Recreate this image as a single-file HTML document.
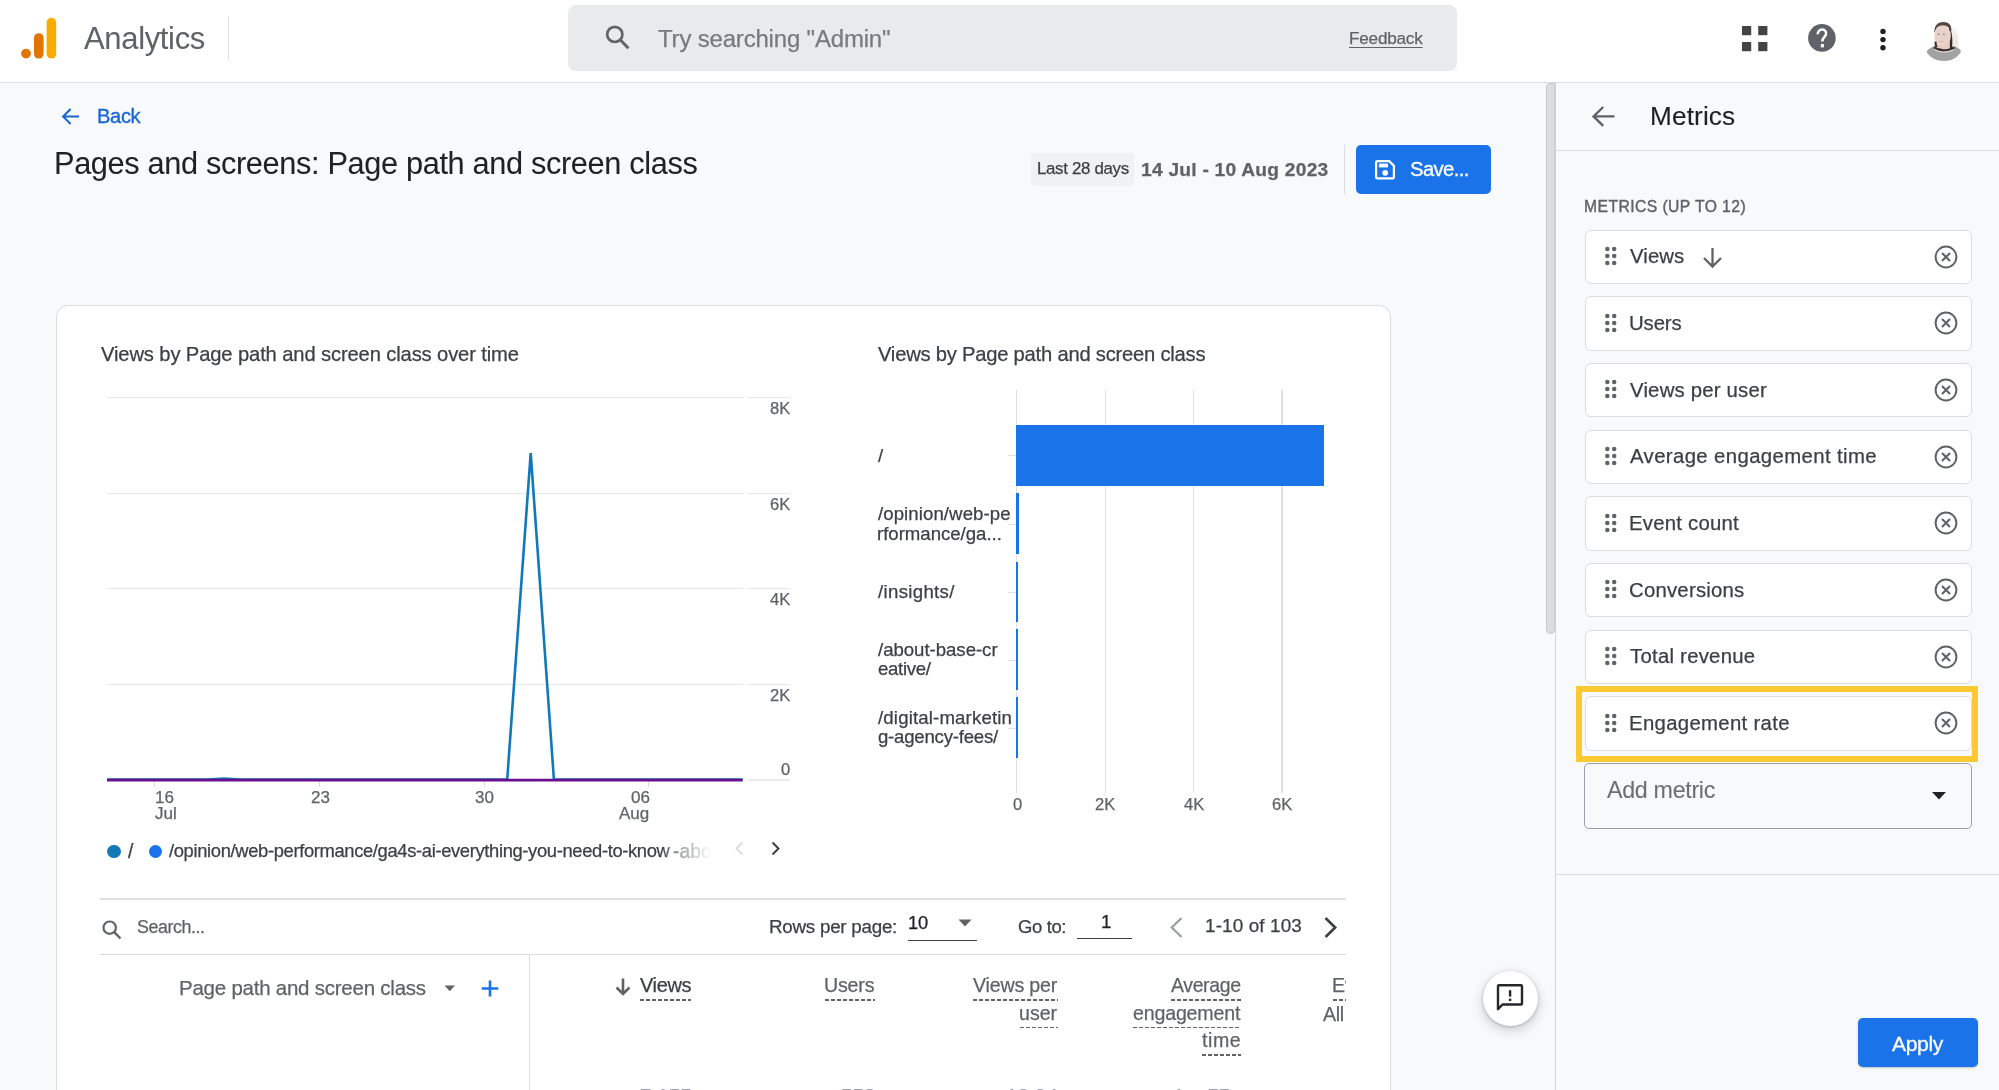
<!DOCTYPE html>
<html><head><meta charset="utf-8"><title>Analytics</title>
<style>
html,body{margin:0;padding:0;}
body{width:1999px;height:1090px;overflow:hidden;position:relative;background:#f8f9fa;font-family:"Liberation Sans",sans-serif;-webkit-font-smoothing:antialiased;}
.t{position:absolute;white-space:nowrap;line-height:1;will-change:transform;-webkit-text-stroke-width:0.25px;}
.ic{position:absolute;display:block;overflow:visible;}
.mrow{position:absolute;left:1584.5px;width:387.5px;height:54.5px;box-sizing:border-box;background:#fff;border:1.3px solid #dadce0;border-radius:6px;}
</style></head><body>
<div style="position:absolute;left:0;top:0;width:1999px;height:81.5px;background:#fff;border-bottom:1.3px solid #dadce0"></div>
<svg class="ic" style="left:20px;top:17px" width="38" height="43" viewBox="0 0 38 43">
<circle cx="6" cy="36.6" r="4.9" fill="#e37400"/>
<rect x="14" y="16.2" width="9.6" height="25.4" rx="4.8" fill="#e37400"/>
<rect x="26.6" y="0.8" width="9.6" height="40.8" rx="4.8" fill="#f9ab00"/></svg>
<div style="position:absolute;left:228px;top:16px;width:1px;height:44px;background:#dadce0"></div>
<div style="position:absolute;left:568px;top:5px;width:889px;height:66px;background:#e9eaee;border-radius:8px"></div>
<svg class="ic" style="left:602px;top:24px" width="30" height="28" viewBox="0 0 30 28"><circle cx="12.8" cy="10.4" r="7.6" fill="none" stroke="#5f6368" stroke-width="2.7"/><path d="M18.2 15.8 L26.4 24.2" stroke="#5f6368" stroke-width="3"/></svg>
<svg class="ic" style="left:1741.6px;top:25.5px" width="26" height="26" viewBox="0 0 26 26" fill="#444"><rect x="0" y="0" width="9.2" height="9.2"/><rect x="16.2" y="0" width="9.2" height="9.2"/><rect x="0" y="16" width="9.2" height="9.2"/><rect x="16.2" y="16" width="9.2" height="9.2"/></svg>
<svg class="ic" style="left:1807.5px;top:24.2px" width="28" height="28" viewBox="0 0 28 28"><circle cx="13.9" cy="13.9" r="13.8" fill="#5f6368"/><path d="M9.7 10.2 C9.7 7.2 11.6 5.6 14 5.6 C16.4 5.6 18.1 7.3 18.1 9.6 C18.1 12.8 14.3 13.2 14.3 17.6" fill="none" stroke="#fff" stroke-width="2.5"/><rect x="12.8" y="20" width="3.1" height="3.4" fill="#fff"/></svg>
<svg class="ic" style="left:1878.5px;top:28px" width="8" height="24" viewBox="0 0 8 24" fill="#202124"><circle cx="4" cy="3.4" r="2.7"/><circle cx="4" cy="11.6" r="2.7"/><circle cx="4" cy="19.8" r="2.7"/></svg>
<svg class="ic" style="left:1915px;top:15px" width="60" height="52" viewBox="0 0 60 52">
<defs><clipPath id="av"><circle cx="28.7" cy="26.5" r="20"/></clipPath><filter id="bl"><feGaussianBlur stdDeviation="0.45"/></filter><filter id="bl2"><feGaussianBlur stdDeviation="2"/></filter></defs>
<g clip-path="url(#av)"><rect width="60" height="52" fill="#ffffff"/>
<g filter="url(#bl2)"><path d="M37 12 C42 16 44 26 43 33 L38 33 Z" fill="#dcdad5" opacity="0.8"/></g>
<g filter="url(#bl)">
<path d="M11 37.5 Q14 31.5 22 31 L36 31 Q45 31.5 46.5 37.5 Q41 46 29 46 Q17 46 11 37.5 Z" fill="#a2a2a2"/>
<path d="M34.5 13 C37.5 17 37.8 26 37 33.5 L34 33 C34.6 27 34.8 20 33.5 15 Z" fill="#3b2b25"/>
<path d="M21 26 L34.5 26 L35 33.5 Q28 36.5 20.5 33.5 Z" fill="#e6cdc4"/><ellipse cx="27.6" cy="20.8" rx="8.3" ry="10.4" fill="#e9d2ca"/>
<path d="M19.3 17 C19.5 9.5 23.5 6.9 28.3 6.9 C33.5 6.9 37 10 36.4 16 L35 15 C33.5 11.5 31 10.6 28 10.6 C24 10.6 21 12 19.8 17.5 Z" fill="#55463f"/>
<path d="M18.8 31.2 Q28 37 39.5 31.5 L39.5 33.8 Q28 39.2 18.8 33.6 Z" fill="#3a2c28"/>
<path d="M19.5 34.6 Q28 39.5 39 34.8" fill="none" stroke="#ece9e4" stroke-width="0.9"/>
<path d="M19.6 26.5 Q19.2 30.5 20.6 32.4 L22.6 32 Q21.2 29.5 21.6 26.5 Z" fill="#3f2e28"/>
<ellipse cx="23.4" cy="19.2" rx="1.3" ry="0.8" fill="#8a929b"/><ellipse cx="28.9" cy="19.2" rx="1.3" ry="0.8" fill="#8a929b"/>
<path d="M23.8 26.2 Q26.3 27.6 28.6 26.2" fill="none" stroke="#d4aaa0" stroke-width="0.9"/>
</g></g></svg>
<svg class="ic" style="left:60px;top:107px" width="22" height="19" viewBox="0 0 22 19"><path d="M19 9.5 H3.4 M10.6 2 L3.1 9.5 L10.6 17" fill="none" stroke="#1765d6" stroke-width="2.0"/></svg>
<div style="position:absolute;left:1031.4px;top:153px;width:103px;height:32.5px;background:#f0f1f2;border-radius:4px"></div>
<div style="position:absolute;left:1344px;top:145px;width:1px;height:49px;background:#dadce0"></div>
<div style="position:absolute;left:1356.3px;top:144.6px;width:134.5px;height:49.3px;background:#1a73e8;border-radius:5px"></div>
<svg class="ic" style="left:1375px;top:159.5px" width="20" height="20" viewBox="0 0 20 20"><path d="M1.1 2.3 Q1.1 1.1 2.3 1.1 H14.2 L18.9 5.8 V17.2 Q18.9 18.4 17.7 18.4 H2.3 Q1.1 18.4 1.1 17.2 Z" fill="none" stroke="#fff" stroke-width="2.2"/><rect x="3.9" y="3.6" width="9.1" height="3.8" fill="#fff"/><circle cx="10.2" cy="12.8" r="2.9" fill="#fff"/></svg>
<div style="position:absolute;left:56px;top:305.2px;width:1332.5px;height:900px;background:#fff;border:1.5px solid #dadce0;border-radius:12px"></div>
<div style="position:absolute;left:107px;top:397.00px;width:636px;height:1.2px;background:#e6e6e6"></div>
<div style="position:absolute;left:748px;top:397.00px;width:42px;height:1.2px;background:#e6e6e6"></div>
<div style="position:absolute;left:107px;top:492.50px;width:636px;height:1.2px;background:#e6e6e6"></div>
<div style="position:absolute;left:748px;top:492.50px;width:42px;height:1.2px;background:#e6e6e6"></div>
<div style="position:absolute;left:107px;top:588.20px;width:636px;height:1.2px;background:#e6e6e6"></div>
<div style="position:absolute;left:748px;top:588.20px;width:42px;height:1.2px;background:#e6e6e6"></div>
<div style="position:absolute;left:107px;top:683.90px;width:636px;height:1.2px;background:#e6e6e6"></div>
<div style="position:absolute;left:748px;top:683.90px;width:42px;height:1.2px;background:#e6e6e6"></div>
<div style="position:absolute;left:748px;top:779px;width:42px;height:1.5px;background:#ececec"></div>
<div style="position:absolute;left:154.30px;top:781px;width:1px;height:6px;background:#dadce0"></div>
<div style="position:absolute;left:318.70px;top:781px;width:1px;height:6px;background:#dadce0"></div>
<div style="position:absolute;left:483.50px;top:781px;width:1px;height:6px;background:#dadce0"></div>
<div style="position:absolute;left:647.50px;top:781px;width:1px;height:6px;background:#dadce0"></div>
<svg class="ic" style="left:100px;top:440px" width="660" height="350" viewBox="100 440 660 350">
<path d="M199 780.5 Q224 774 249 780.5" fill="#1279b8" stroke="none"/>
<polyline points="107,779.5 507.2,779.5 530.7,453 553.9,779.5 742.6,779.5" fill="none" stroke="#1279b8" stroke-width="2.6" stroke-linejoin="miter"/>
<line x1="107" y1="780.2" x2="742.6" y2="780.2" stroke="#6a0d8f" stroke-width="2.7"/>
</svg>
<div style="position:absolute;left:107px;top:844.6px;width:13.6px;height:13.6px;border-radius:50%;background:#1279b8"></div>
<div style="position:absolute;left:148.5px;top:844.6px;width:13.6px;height:13.6px;border-radius:50%;background:#1a73e8"></div>
<svg class="ic" style="left:734px;top:841px" width="50" height="16" viewBox="0 0 50 16"><path d="M8.5 1.5 L2.5 7.5 L8.5 13.5" fill="none" stroke="#dadce0" stroke-width="1.8"/><path d="M38.5 1.5 L44.5 7.5 L38.5 13.5" fill="none" stroke="#3c4043" stroke-width="2"/></svg>
<div style="position:absolute;left:1015.95px;top:390px;width:1.5px;height:403px;background:#e0e0e4"></div>
<div style="position:absolute;left:1104.55px;top:390px;width:1.5px;height:403px;background:#e0e0e4"></div>
<div style="position:absolute;left:1192.85px;top:390px;width:1.5px;height:403px;background:#e0e0e4"></div>
<div style="position:absolute;left:1281.25px;top:390px;width:1.5px;height:403px;background:#e0e0e4"></div>
<div style="position:absolute;left:1008px;top:455.10px;width:8px;height:1.2px;background:#e0e0e4"></div>
<div style="position:absolute;left:1008px;top:523.50px;width:8px;height:1.2px;background:#e0e0e4"></div>
<div style="position:absolute;left:1008px;top:591.50px;width:8px;height:1.2px;background:#e0e0e4"></div>
<div style="position:absolute;left:1008px;top:659.50px;width:8px;height:1.2px;background:#e0e0e4"></div>
<div style="position:absolute;left:1008px;top:727.50px;width:8px;height:1.2px;background:#e0e0e4"></div>
<div style="position:absolute;left:1016px;top:425px;width:308px;height:60.6px;background:#1a73e8"></div>
<div style="position:absolute;left:1016px;top:493.4px;width:2.8px;height:60.5px;background:#1a73e8"></div>
<div style="position:absolute;left:1016px;top:561.5px;width:2.4px;height:60.5px;background:#1a73e8"></div>
<div style="position:absolute;left:1016px;top:629px;width:2px;height:60.5px;background:#1a73e8"></div>
<div style="position:absolute;left:1016px;top:697px;width:2px;height:60.5px;background:#1a73e8"></div>
<div style="position:absolute;left:100px;top:898px;width:1246px;height:1.5px;background:#e0e0e0"></div>
<div style="position:absolute;left:100px;top:953.6px;width:1246px;height:1.5px;background:#dadce0"></div>
<div style="position:absolute;left:529px;top:954px;width:1.3px;height:140px;background:#dadce0"></div>
<svg class="ic" style="left:101px;top:919px" width="22" height="22" viewBox="0 0 22 22"><circle cx="8.7" cy="8.7" r="6.2" fill="none" stroke="#5f6368" stroke-width="2.2"/><path d="M13.2 13.2 L19.5 19.5" stroke="#5f6368" stroke-width="2.4"/></svg>
<div style="position:absolute;left:907.7px;top:939.5px;width:69.3px;height:1.3px;background:#3c4043"></div>
<svg class="ic" style="left:958px;top:919px" width="14" height="8" viewBox="0 0 14 8"><path d="M0.5 0.5 H13.5 L7 7.5 Z" fill="#5f6368"/></svg>
<div style="position:absolute;left:1077.4px;top:938px;width:55px;height:1.3px;background:#3c4043"></div>
<svg class="ic" style="left:1167px;top:916px" width="175" height="24" viewBox="0 0 175 24"><path d="M14.5 2 L4.8 11.5 L14.5 21" fill="none" stroke="#9aa0a6" stroke-width="2.4"/><path d="M158.5 2 L168.2 11.5 L158.5 21" fill="none" stroke="#3c4043" stroke-width="2.6"/></svg>
<svg class="ic" style="left:443px;top:984px" width="14" height="9" viewBox="0 0 14 9"><path d="M1.5 1.5 H12 L6.75 7.2 Z" fill="#5f6368"/></svg>
<svg class="ic" style="left:480px;top:979px" width="20" height="19" viewBox="0 0 20 19"><path d="M10 1.5 V17.5 M1.7 9.5 H18.3" stroke="#1a73e8" stroke-width="2.6"/></svg>
<svg class="ic" style="left:614px;top:977px" width="18" height="19" viewBox="0 0 18 19"><path d="M9 1.5 V17 M2.5 10.5 L9 17 L15.5 10.5" fill="none" stroke="#5f6368" stroke-width="2.6"/></svg>
<div style="position:absolute;left:639.7px;top:999.0px;width:51.5px;height:1.6px;background:repeating-linear-gradient(90deg,#5f6368 0 4px,transparent 4px 6px)"></div>
<div style="position:absolute;left:825.0px;top:999.1px;width:49.7px;height:1.6px;background:repeating-linear-gradient(90deg,#5f6368 0 4px,transparent 4px 6px)"></div>
<div style="position:absolute;left:972.8px;top:999.1px;width:84.8px;height:1.6px;background:repeating-linear-gradient(90deg,#5f6368 0 4px,transparent 4px 6px)"></div>
<div style="position:absolute;left:1020.0px;top:1026.9px;width:37.6px;height:1.6px;background:repeating-linear-gradient(90deg,#5f6368 0 4px,transparent 4px 6px)"></div>
<div style="position:absolute;left:1170.8px;top:999.1px;width:70.0px;height:1.6px;background:repeating-linear-gradient(90deg,#5f6368 0 4px,transparent 4px 6px)"></div>
<div style="position:absolute;left:1132.9px;top:1026.9px;width:107.9px;height:1.6px;background:repeating-linear-gradient(90deg,#5f6368 0 4px,transparent 4px 6px)"></div>
<div style="position:absolute;left:1202.0px;top:1054.3px;width:38.8px;height:1.6px;background:repeating-linear-gradient(90deg,#5f6368 0 4px,transparent 4px 6px)"></div>
<div style="position:absolute;left:1332.6px;top:999.1px;width:13.4px;height:1.6px;background:repeating-linear-gradient(90deg,#5f6368 0 4px,transparent 4px 6px)"></div>
<div style="position:absolute;left:1483px;top:971px;width:55px;height:55px;border-radius:50%;background:#fff;box-shadow:0 1px 3px rgba(60,64,67,.3),0 4px 8px 3px rgba(60,64,67,.15)"></div>
<svg class="ic" style="left:1495px;top:983px" width="30" height="30" viewBox="0 0 30 30"><path d="M3 3.2 Q3 2.2 4 2.2 H26 Q27 2.2 27 3.2 V20.5 Q27 21.5 26 21.5 H7.5 L3 26.2 Z" fill="none" stroke="#25282b" stroke-width="2.4" stroke-linejoin="round"/><rect x="13.9" y="7.2" width="2.4" height="6.4" fill="#25282b"/><rect x="13.9" y="15.6" width="2.4" height="2.4" fill="#25282b"/></svg>
<div style="position:absolute;left:1546.3px;top:83px;width:9.2px;height:551px;box-sizing:border-box;background:#dcdde0;border:1.2px solid #c9cacd;border-radius:5px 1px 5px 5px"></div>
<div style="position:absolute;left:1554.8px;top:83px;width:1.2px;height:1008px;background:#d3d4d7"></div>
<div style="position:absolute;left:1556px;top:149.5px;width:443px;height:1.3px;background:#dadce0"></div>
<svg class="ic" style="left:1590px;top:104px" width="26" height="25" viewBox="0 0 26 25"><path d="M24.5 12.4 H4 M13.2 3 L3.6 12.4 L13.2 21.8" fill="none" stroke="#5f6368" stroke-width="2.4"/></svg>
<div class="mrow" style="top:229.50px"></div>
<svg class="ic" style="left:1603.7px;top:246.00px" width="14" height="21" viewBox="0 0 14 21" fill="#5f6368"><circle cx="3.3" cy="3" r="2.25"/><circle cx="3.3" cy="10" r="2.25"/><circle cx="3.3" cy="17.1" r="2.25"/><circle cx="10.2" cy="3" r="2.25"/><circle cx="10.2" cy="10" r="2.25"/><circle cx="10.2" cy="17.1" r="2.25"/></svg>
<svg class="ic" style="left:1933.2px;top:243.70px" width="26" height="26" viewBox="0 0 26 26" fill="none" stroke="#5f6368" stroke-width="2.0"><circle cx="13" cy="13" r="10.4"/><path d="M9.0 9.0 L17.0 17.0 M17.0 9.0 L9.0 17.0" stroke-width="2.1"/></svg>
<div class="mrow" style="top:296.17px"></div>
<svg class="ic" style="left:1603.7px;top:312.67px" width="14" height="21" viewBox="0 0 14 21" fill="#5f6368"><circle cx="3.3" cy="3" r="2.25"/><circle cx="3.3" cy="10" r="2.25"/><circle cx="3.3" cy="17.1" r="2.25"/><circle cx="10.2" cy="3" r="2.25"/><circle cx="10.2" cy="10" r="2.25"/><circle cx="10.2" cy="17.1" r="2.25"/></svg>
<svg class="ic" style="left:1933.2px;top:310.37px" width="26" height="26" viewBox="0 0 26 26" fill="none" stroke="#5f6368" stroke-width="2.0"><circle cx="13" cy="13" r="10.4"/><path d="M9.0 9.0 L17.0 17.0 M17.0 9.0 L9.0 17.0" stroke-width="2.1"/></svg>
<div class="mrow" style="top:362.83px"></div>
<svg class="ic" style="left:1603.7px;top:379.33px" width="14" height="21" viewBox="0 0 14 21" fill="#5f6368"><circle cx="3.3" cy="3" r="2.25"/><circle cx="3.3" cy="10" r="2.25"/><circle cx="3.3" cy="17.1" r="2.25"/><circle cx="10.2" cy="3" r="2.25"/><circle cx="10.2" cy="10" r="2.25"/><circle cx="10.2" cy="17.1" r="2.25"/></svg>
<svg class="ic" style="left:1933.2px;top:377.03px" width="26" height="26" viewBox="0 0 26 26" fill="none" stroke="#5f6368" stroke-width="2.0"><circle cx="13" cy="13" r="10.4"/><path d="M9.0 9.0 L17.0 17.0 M17.0 9.0 L9.0 17.0" stroke-width="2.1"/></svg>
<div class="mrow" style="top:429.50px"></div>
<svg class="ic" style="left:1603.7px;top:446.00px" width="14" height="21" viewBox="0 0 14 21" fill="#5f6368"><circle cx="3.3" cy="3" r="2.25"/><circle cx="3.3" cy="10" r="2.25"/><circle cx="3.3" cy="17.1" r="2.25"/><circle cx="10.2" cy="3" r="2.25"/><circle cx="10.2" cy="10" r="2.25"/><circle cx="10.2" cy="17.1" r="2.25"/></svg>
<svg class="ic" style="left:1933.2px;top:443.70px" width="26" height="26" viewBox="0 0 26 26" fill="none" stroke="#5f6368" stroke-width="2.0"><circle cx="13" cy="13" r="10.4"/><path d="M9.0 9.0 L17.0 17.0 M17.0 9.0 L9.0 17.0" stroke-width="2.1"/></svg>
<div class="mrow" style="top:496.17px"></div>
<svg class="ic" style="left:1603.7px;top:512.67px" width="14" height="21" viewBox="0 0 14 21" fill="#5f6368"><circle cx="3.3" cy="3" r="2.25"/><circle cx="3.3" cy="10" r="2.25"/><circle cx="3.3" cy="17.1" r="2.25"/><circle cx="10.2" cy="3" r="2.25"/><circle cx="10.2" cy="10" r="2.25"/><circle cx="10.2" cy="17.1" r="2.25"/></svg>
<svg class="ic" style="left:1933.2px;top:510.37px" width="26" height="26" viewBox="0 0 26 26" fill="none" stroke="#5f6368" stroke-width="2.0"><circle cx="13" cy="13" r="10.4"/><path d="M9.0 9.0 L17.0 17.0 M17.0 9.0 L9.0 17.0" stroke-width="2.1"/></svg>
<div class="mrow" style="top:562.84px"></div>
<svg class="ic" style="left:1603.7px;top:579.34px" width="14" height="21" viewBox="0 0 14 21" fill="#5f6368"><circle cx="3.3" cy="3" r="2.25"/><circle cx="3.3" cy="10" r="2.25"/><circle cx="3.3" cy="17.1" r="2.25"/><circle cx="10.2" cy="3" r="2.25"/><circle cx="10.2" cy="10" r="2.25"/><circle cx="10.2" cy="17.1" r="2.25"/></svg>
<svg class="ic" style="left:1933.2px;top:577.04px" width="26" height="26" viewBox="0 0 26 26" fill="none" stroke="#5f6368" stroke-width="2.0"><circle cx="13" cy="13" r="10.4"/><path d="M9.0 9.0 L17.0 17.0 M17.0 9.0 L9.0 17.0" stroke-width="2.1"/></svg>
<div class="mrow" style="top:629.50px"></div>
<svg class="ic" style="left:1603.7px;top:646.00px" width="14" height="21" viewBox="0 0 14 21" fill="#5f6368"><circle cx="3.3" cy="3" r="2.25"/><circle cx="3.3" cy="10" r="2.25"/><circle cx="3.3" cy="17.1" r="2.25"/><circle cx="10.2" cy="3" r="2.25"/><circle cx="10.2" cy="10" r="2.25"/><circle cx="10.2" cy="17.1" r="2.25"/></svg>
<svg class="ic" style="left:1933.2px;top:643.70px" width="26" height="26" viewBox="0 0 26 26" fill="none" stroke="#5f6368" stroke-width="2.0"><circle cx="13" cy="13" r="10.4"/><path d="M9.0 9.0 L17.0 17.0 M17.0 9.0 L9.0 17.0" stroke-width="2.1"/></svg>
<div class="mrow" style="top:696.17px"></div>
<svg class="ic" style="left:1603.7px;top:712.67px" width="14" height="21" viewBox="0 0 14 21" fill="#5f6368"><circle cx="3.3" cy="3" r="2.25"/><circle cx="3.3" cy="10" r="2.25"/><circle cx="3.3" cy="17.1" r="2.25"/><circle cx="10.2" cy="3" r="2.25"/><circle cx="10.2" cy="10" r="2.25"/><circle cx="10.2" cy="17.1" r="2.25"/></svg>
<svg class="ic" style="left:1933.2px;top:710.37px" width="26" height="26" viewBox="0 0 26 26" fill="none" stroke="#5f6368" stroke-width="2.0"><circle cx="13" cy="13" r="10.4"/><path d="M9.0 9.0 L17.0 17.0 M17.0 9.0 L9.0 17.0" stroke-width="2.1"/></svg>
<svg class="ic" style="left:1702px;top:246.5px" width="21" height="21" viewBox="0 0 21 21"><path d="M10.5 1 V19.5 M2 11 L10.5 19.5 L19 11" fill="none" stroke="#5f6368" stroke-width="2.3"/></svg>
<div style="position:absolute;left:1576px;top:686px;width:402px;height:76px;box-sizing:border-box;border:6px solid #fcc934"></div>
<div style="position:absolute;left:1584px;top:763px;width:388.3px;height:65.5px;box-sizing:border-box;border:1.5px solid #9aa0a6;border-radius:5px"></div>
<svg class="ic" style="left:1931px;top:791px" width="16" height="10" viewBox="0 0 16 10"><path d="M1 1 H15 L8 8.6 Z" fill="#202124"/></svg>
<div style="position:absolute;left:1556px;top:873.5px;width:443px;height:1.3px;background:#dadce0"></div>
<div style="position:absolute;left:1858px;top:1018.2px;width:120px;height:48.6px;background:#1a73e8;border-radius:5px;box-shadow:0 1px 2px rgba(60,64,67,.3)"></div>
<span class="t" id="t0" style="left:84.00px;top:23.33px;font-size:31.03px;color:#5f6368;font-weight:400;letter-spacing:-0.350px;-webkit-text-stroke-width:0.05px;">Analytics</span>
<span class="t" id="t1" style="left:658.10px;top:26.60px;font-size:23.98px;color:#767b81;font-weight:400;letter-spacing:-0.171px;">Try searching "Admin"</span>
<span class="t" id="t2" style="left:1348.80px;top:29.88px;font-size:17.15px;color:#5f6368;font-weight:400;letter-spacing:-0.215px;text-decoration:underline;text-underline-offset:3px;">Feedback</span>
<span class="t" id="t3" style="left:96.53px;top:106.49px;font-size:20.10px;color:#1765d6;font-weight:400;letter-spacing:-0.350px;-webkit-text-stroke:0.35px #1765d6;">Back</span>
<span class="t" id="t4" style="left:54.05px;top:148.60px;font-size:30.72px;color:#202124;font-weight:400;letter-spacing:-0.350px;-webkit-text-stroke-width:0.05px;">Pages and screens: Page path and screen class</span>
<span class="t" id="t5" style="left:1036.80px;top:161.13px;font-size:16.86px;color:#3c4043;font-weight:400;letter-spacing:-0.315px;">Last 28 days</span>
<span class="t" id="t6" style="left:1141.40px;top:159.66px;font-size:19.19px;color:#5f6368;font-weight:700;letter-spacing:0.236px;">14 Jul - 10 Aug 2023</span>
<span class="t" id="t7" style="left:1409.50px;top:159.14px;font-size:20.28px;color:#ffffff;font-weight:400;letter-spacing:-0.636px;-webkit-text-stroke:0.3px #fff;">Save...</span>
<span class="t" id="t8" style="left:101.00px;top:343.80px;font-size:20.20px;color:#3c4043;font-weight:400;letter-spacing:-0.131px;">Views by Page path and screen class over time</span>
<span class="t" id="t9" style="left:877.80px;top:343.80px;font-size:20.20px;color:#3c4043;font-weight:400;letter-spacing:-0.226px;">Views by Page path and screen class</span>
<span class="t" id="t10" style="left:770.20px;top:400.57px;font-size:16.57px;color:#5f6368;font-weight:400;letter-spacing:0.000px;">8K</span>
<span class="t" id="t11" style="left:770.20px;top:496.57px;font-size:16.57px;color:#5f6368;font-weight:400;letter-spacing:0.000px;">6K</span>
<span class="t" id="t12" style="left:770.20px;top:592.07px;font-size:16.57px;color:#5f6368;font-weight:400;letter-spacing:0.000px;">4K</span>
<span class="t" id="t13" style="left:770.20px;top:687.57px;font-size:16.57px;color:#5f6368;font-weight:400;letter-spacing:0.000px;">2K</span>
<span class="t" id="t14" style="left:781.40px;top:761.57px;font-size:16.57px;color:#5f6368;font-weight:400;letter-spacing:0.000px;">0</span>
<span class="t" id="t15" style="left:154.50px;top:788.70px;font-size:17.01px;color:#5f6368;font-weight:400;letter-spacing:0.000px;">16</span>
<span class="t" id="t16" style="left:155.30px;top:805.40px;font-size:17.01px;color:#5f6368;font-weight:400;letter-spacing:0.000px;">Jul</span>
<span class="t" id="t17" style="left:310.60px;top:788.70px;font-size:17.01px;color:#5f6368;font-weight:400;letter-spacing:0.000px;">23</span>
<span class="t" id="t18" style="left:475.00px;top:788.70px;font-size:17.01px;color:#5f6368;font-weight:400;letter-spacing:0.000px;">30</span>
<span class="t" id="t19" style="left:630.55px;top:788.70px;font-size:17.01px;color:#5f6368;font-weight:400;letter-spacing:0.000px;">06</span>
<span class="t" id="t20" style="left:619.21px;top:805.40px;font-size:17.01px;color:#5f6368;font-weight:400;letter-spacing:0.000px;">Aug</span>
<span class="t" id="t21" style="left:128.00px;top:841.54px;font-size:19.33px;color:#3c4043;font-weight:400;letter-spacing:0.000px;">/</span>
<span class="t" id="t22" style="left:169.40px;top:842.35px;font-size:18.37px;color:#3c4043;font-weight:400;letter-spacing:-0.350px;">/opinion/web-performance/ga4s-ai-everything-you-need-to-know</span>
<span class="t" id="t23" style="left:672.80px;top:841.54px;font-size:19.33px;color:#3c4043;font-weight:400;letter-spacing:0.000px;">-about</span>
<span class="t" id="t24" style="left:877.80px;top:446.85px;font-size:18.60px;color:#3c4043;font-weight:400;letter-spacing:0.000px;">/</span>
<span class="t" id="t25" style="left:877.80px;top:505.25px;font-size:18.60px;color:#3c4043;font-weight:400;letter-spacing:0.090px;">/opinion/web-pe</span>
<span class="t" id="t26" style="left:876.80px;top:525.25px;font-size:18.60px;color:#3c4043;font-weight:400;letter-spacing:-0.013px;">rformance/ga...</span>
<span class="t" id="t27" style="left:877.80px;top:582.85px;font-size:18.60px;color:#3c4043;font-weight:400;letter-spacing:0.332px;">/insights/</span>
<span class="t" id="t28" style="left:877.80px;top:640.85px;font-size:18.60px;color:#3c4043;font-weight:400;letter-spacing:-0.023px;">/about-base-cr</span>
<span class="t" id="t29" style="left:877.80px;top:660.45px;font-size:18.60px;color:#3c4043;font-weight:400;letter-spacing:-0.303px;">eative/</span>
<span class="t" id="t30" style="left:877.80px;top:709.15px;font-size:18.60px;color:#3c4043;font-weight:400;letter-spacing:0.163px;">/digital-marketin</span>
<span class="t" id="t31" style="left:877.80px;top:728.45px;font-size:18.60px;color:#3c4043;font-weight:400;letter-spacing:-0.217px;">g-agency-fees/</span>
<span class="t" id="t32" style="left:1012.50px;top:796.57px;font-size:16.57px;color:#5f6368;font-weight:400;letter-spacing:0.000px;">0</span>
<span class="t" id="t33" style="left:1095.20px;top:796.57px;font-size:16.57px;color:#5f6368;font-weight:400;letter-spacing:0.000px;">2K</span>
<span class="t" id="t34" style="left:1183.50px;top:796.57px;font-size:16.57px;color:#5f6368;font-weight:400;letter-spacing:0.000px;">4K</span>
<span class="t" id="t35" style="left:1271.90px;top:796.57px;font-size:16.57px;color:#5f6368;font-weight:400;letter-spacing:0.000px;">6K</span>
<span class="t" id="t36" style="left:136.70px;top:919.40px;font-size:17.84px;color:#5f6368;font-weight:400;letter-spacing:-0.415px;">Search...</span>
<span class="t" id="t37" style="left:768.70px;top:917.63px;font-size:18.75px;color:#3c4043;font-weight:400;letter-spacing:-0.232px;">Rows per page:</span>
<span class="t" id="t38" style="left:908.00px;top:914.10px;font-size:18.31px;color:#202124;font-weight:400;letter-spacing:-0.176px;">10</span>
<span class="t" id="t39" style="left:1017.50px;top:917.79px;font-size:18.44px;color:#3c4043;font-weight:400;letter-spacing:-0.350px;">Go to:</span>
<span class="t" id="t40" style="left:1101.30px;top:913.43px;font-size:18.75px;color:#202124;font-weight:400;letter-spacing:0.000px;">1</span>
<span class="t" id="t41" style="left:1204.90px;top:917.41px;font-size:18.90px;color:#3c4043;font-weight:400;letter-spacing:0.130px;">1-10 of 103</span>
<span class="t" id="t42" style="left:178.70px;top:978.25px;font-size:20.49px;color:#5f6368;font-weight:400;letter-spacing:-0.230px;">Page path and screen class</span>
<span class="t" id="t43" style="left:639.70px;top:975.48px;font-size:19.99px;color:#3c4043;font-weight:400;letter-spacing:-0.350px;">Views</span>
<span class="t" id="t44" style="left:824.00px;top:975.79px;font-size:19.62px;color:#5f6368;font-weight:400;letter-spacing:-0.175px;">Users</span>
<span class="t" id="t45" style="left:972.80px;top:975.79px;font-size:19.62px;color:#5f6368;font-weight:400;letter-spacing:-0.177px;">Views per</span>
<span class="t" id="t46" style="left:1019.00px;top:1003.79px;font-size:19.62px;color:#5f6368;font-weight:400;letter-spacing:-0.005px;">user</span>
<span class="t" id="t47" style="left:1170.80px;top:975.94px;font-size:19.44px;color:#5f6368;font-weight:400;letter-spacing:-0.350px;">Average</span>
<span class="t" id="t48" style="left:1132.90px;top:1003.79px;font-size:19.62px;color:#5f6368;font-weight:400;letter-spacing:-0.187px;">engagement</span>
<span class="t" id="t49" style="left:1202.00px;top:1031.39px;font-size:19.62px;color:#5f6368;font-weight:400;letter-spacing:0.554px;">time</span>
<span class="t" id="t50" style="left:1322.70px;top:1005.49px;font-size:19.62px;color:#5f6368;font-weight:400;letter-spacing:-0.318px;">All</span>
<span class="t" id="t51" style="left:1331.60px;top:975.79px;font-size:19.62px;color:#5f6368;font-weight:400;letter-spacing:0.000px;">Event</span>
<span class="t" id="t52" style="left:640.06px;top:1085.93px;font-size:20.64px;color:#9aa0a6;font-weight:400;letter-spacing:0.000px;">7,155</span>
<span class="t" id="t53" style="left:840.76px;top:1085.93px;font-size:20.64px;color:#9aa0a6;font-weight:400;letter-spacing:0.000px;">553</span>
<span class="t" id="t54" style="left:1006.46px;top:1085.93px;font-size:20.64px;color:#9aa0a6;font-weight:400;letter-spacing:0.000px;">12.94</span>
<span class="t" id="t55" style="left:1173.48px;top:1085.93px;font-size:20.64px;color:#9aa0a6;font-weight:400;letter-spacing:0.000px;">1m 55s</span>
<span class="t" id="t56" style="left:1649.60px;top:103.45px;font-size:26.16px;color:#202124;font-weight:400;letter-spacing:0.150px;-webkit-text-stroke-width:0.1px;">Metrics</span>
<span class="t" id="t57" style="left:1583.50px;top:199.21px;font-size:15.70px;color:#5f6368;font-weight:400;letter-spacing:0.433px;-webkit-text-stroke:0.4px #5f6368;">METRICS (UP TO 12)</span>
<span class="t" id="t58" style="left:1630.30px;top:246.27px;font-size:20.35px;color:#3c4043;font-weight:400;letter-spacing:0.077px;">Views</span>
<span class="t" id="t59" style="left:1629.30px;top:312.94px;font-size:20.35px;color:#3c4043;font-weight:400;letter-spacing:-0.105px;">Users</span>
<span class="t" id="t60" style="left:1630.30px;top:379.61px;font-size:20.35px;color:#3c4043;font-weight:400;letter-spacing:0.199px;">Views per user</span>
<span class="t" id="t61" style="left:1630.30px;top:446.28px;font-size:20.35px;color:#3c4043;font-weight:400;letter-spacing:0.379px;">Average engagement time</span>
<span class="t" id="t62" style="left:1629.30px;top:512.94px;font-size:20.35px;color:#3c4043;font-weight:400;letter-spacing:0.219px;">Event count</span>
<span class="t" id="t63" style="left:1629.30px;top:579.61px;font-size:20.35px;color:#3c4043;font-weight:400;letter-spacing:0.218px;">Conversions</span>
<span class="t" id="t64" style="left:1630.30px;top:646.28px;font-size:20.35px;color:#3c4043;font-weight:400;letter-spacing:0.247px;">Total revenue</span>
<span class="t" id="t65" style="left:1629.30px;top:712.94px;font-size:20.35px;color:#3c4043;font-weight:400;letter-spacing:0.318px;">Engagement rate</span>
<span class="t" id="t66" style="left:1606.80px;top:778.51px;font-size:23.26px;color:#6b7075;font-weight:400;letter-spacing:-0.310px;-webkit-text-stroke-width:0.1px;">Add metric</span>
<span class="t" id="t67" style="left:1892.00px;top:1032.75px;font-size:21.08px;color:#ffffff;font-weight:400;letter-spacing:-0.350px;-webkit-text-stroke:0.3px #fff;">Apply</span>
<div style="position:absolute;left:664px;top:835px;width:48px;height:30px;background:linear-gradient(90deg,rgba(255,255,255,0.15),rgba(255,255,255,0.55) 40%,#fff 100%)"></div>
<div style="position:absolute;left:711px;top:835px;width:22px;height:30px;background:#fff"></div>
<div style="position:absolute;left:1346px;top:960px;width:43px;height:100px;background:#fff"></div>
</body></html>
